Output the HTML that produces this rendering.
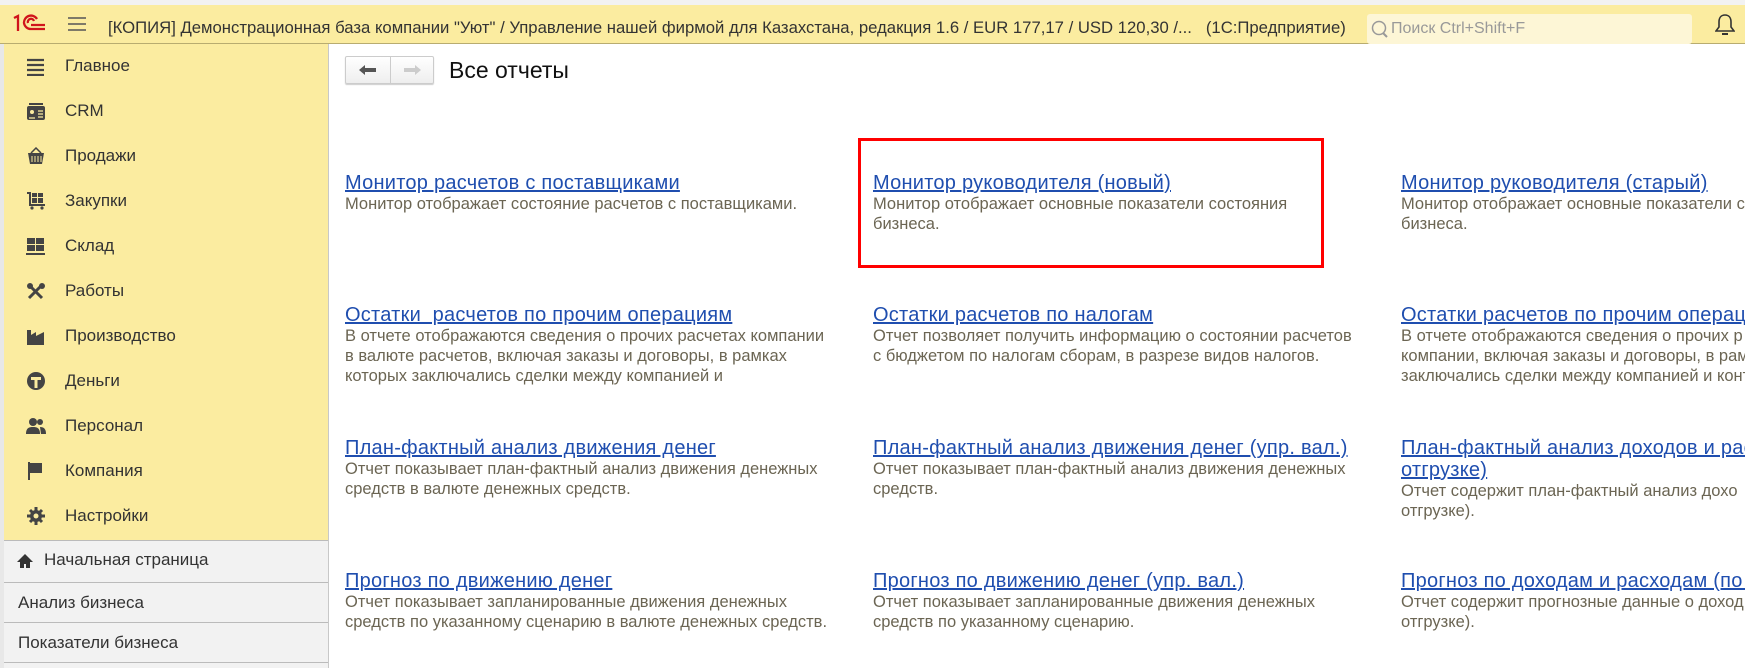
<!DOCTYPE html>
<html><head><meta charset="utf-8"><style>
*{margin:0;padding:0;box-sizing:border-box}
body{width:1745px;height:668px;overflow:hidden;background:#fff;font-family:"Liberation Sans",Arial,sans-serif;position:relative}
.top{position:absolute;left:0;top:5px;width:1745px;height:39px;background:#fbeca0;border-bottom:1px solid #b8ac70}
.strip{position:absolute;left:0;top:0;width:1745px;height:5px;background:#f2f2f2}
.title{position:absolute;left:108px;top:13px;font-size:16.7px;color:#333;white-space:nowrap}
.search{position:absolute;left:1367px;top:9px;width:325px;height:30px;background:#fdf6d6;border-radius:3px;font-size:16px;color:#999;padding:6px 0 0 24px}
.side{position:absolute;left:0;top:44px;width:329px;height:624px;background:#f2f2f2;border-left:4px solid #e8e8e8;border-right:1px solid #c8c8c8}
.yel{position:absolute;left:0;top:0;width:324px;height:497px;background:#fbeca0;border-bottom:1px solid #bbb}
.mi{position:absolute;left:61px;font-size:17px;color:#333}
.ic{position:absolute;left:22px;width:20px;height:18px}
.sub{position:absolute;left:0;width:324px;border-bottom:1px solid #bbb;font-size:17px;color:#333;padding-left:14px}
.nav{position:absolute;left:345px;top:56px;width:89px;height:28px;border:1px solid #ccc;border-radius:2px;background:linear-gradient(#fff,#eee);box-shadow:0 1px 1px #ccc}
.h{position:absolute;left:449px;top:57px;font-size:23px;color:#111}
.it{position:absolute;width:520px;white-space:nowrap}
.it a{display:block;font-size:20px;letter-spacing:0.25px;color:#1f4eaf;text-decoration:underline;line-height:22px}
.it p{font-size:16.5px;color:#6b6553;line-height:20px}
.red{position:absolute;left:858px;top:138px;width:466px;height:130px;border:3px solid #f00}
</style></head><body>
<div class="strip"></div>
<div class="top">
<svg style="position:absolute;left:12px;top:9px" width="34" height="18" viewBox="0 0 34 18"><path d="M2 4l4-2v15M12 9a7 7 0 0 1 13-4M12 9a7 7 0 0 0 7 6h14M16 9a3 3 0 0 1 6-2M19 11h14" fill="none" stroke="#d0141b" stroke-width="2.3"/></svg>
<svg style="position:absolute;left:68px;top:12px" width="18" height="14"><path d="M0 1h18M0 7h18M0 13h18" stroke="#555" stroke-width="1.5"/></svg>
<div class="title">[КОПИЯ] Демонстрационная база компании "Уют" / Управление нашей фирмой для Казахстана, редакция 1.6 / EUR 177,17 / USD 120,30 /...&nbsp;&nbsp;&nbsp;(1С:Предприятие)</div>
<div class="search"><svg style="position:absolute;left:4px;top:6px" width="18" height="19"><circle cx="8" cy="8" r="6.5" fill="none" stroke="#999" stroke-width="1.5"/><path d="M12 13l4 4" stroke="#999" stroke-width="2"/></svg>Поиск Ctrl+Shift+F</div>
<svg style="position:absolute;left:1715px;top:8px" width="20" height="24"><path d="M10 2c-4 0-6 3-6 7v5l-3 4h18l-3-4V9c0-4-2-7-6-7z" fill="none" stroke="#333" stroke-width="1.6"/><path d="M7 20h6v2H7z" fill="#333"/></svg>
</div>
<div class="side">
<div class="yel">
<svg class="ic" style="top:14px" viewBox="0 0 20 18"><path d="M1 2h17M1 7h17M1 12h17M1 17h17" stroke="#444" stroke-width="2.2"/></svg><div class="mi" style="top:12px">Главное</div>
<svg class="ic" style="top:58px" viewBox="0 0 20 18"><rect x="1" y="4" width="18" height="14" rx="2" fill="#444"/><rect x="3" y="1" width="14" height="2" fill="#444"/><circle cx="6" cy="10" r="2" fill="#fbeca0"/><path d="M12 9h5M12 12h5M12 15h5M3 16h6" stroke="#fbeca0" stroke-width="1.3"/></svg><div class="mi" style="top:57px">CRM</div>
<svg class="ic" style="top:103px" viewBox="0 0 20 18"><path d="M2 6h16l-2 11H4z" fill="#444"/><path d="M5 6l5-5 5 5" fill="none" stroke="#444" stroke-width="1.5"/><path d="M6 9v6M9 9v6M12 9v6M15 9v6" stroke="#fbeca0"/></svg><div class="mi" style="top:102px">Продажи</div>
<svg class="ic" style="top:148px" viewBox="0 0 20 18"><path d="M1 1h3v12h15" fill="none" stroke="#444" stroke-width="2"/><rect x="6" y="1" width="5" height="4" fill="#444"/><rect x="12" y="1" width="5" height="4" fill="#444"/><rect x="6" y="6" width="5" height="5" fill="#444"/><rect x="12" y="6" width="5" height="5" fill="#444"/><circle cx="6" cy="16" r="1.6" fill="#444"/><circle cx="16" cy="16" r="1.6" fill="#444"/></svg><div class="mi" style="top:147px">Закупки</div>
<svg class="ic" style="top:193px" viewBox="0 0 20 18"><rect x="1" y="1" width="8" height="6" fill="#444"/><rect x="10" y="1" width="8" height="6" fill="#444"/><rect x="1" y="8" width="8" height="6" fill="#444"/><rect x="10" y="8" width="8" height="6" fill="#444"/><rect x="0" y="16" width="19" height="2" fill="#444"/></svg><div class="mi" style="top:192px">Склад</div>
<svg class="ic" style="top:238px" viewBox="0 0 20 18"><path d="M3 16L16 3M3 3l13 13" stroke="#444" stroke-width="3"/><circle cx="4" cy="4" r="3" fill="#444"/><circle cx="16" cy="4" r="3" fill="#444"/></svg><div class="mi" style="top:237px">Работы</div>
<svg class="ic" style="top:283px" viewBox="0 0 20 18"><path d="M1 18V3h4v5l5-3v4l8-4v13z" fill="#444"/></svg><div class="mi" style="top:282px">Производство</div>
<svg class="ic" style="top:328px" viewBox="0 0 20 18"><circle cx="10" cy="9" r="9" fill="#444"/><path d="M5 5h10v3H11.5v8h-3V8H5z" fill="#fbeca0"/></svg><div class="mi" style="top:327px">Деньги</div>
<svg class="ic" style="top:373px" viewBox="0 0 20 18"><circle cx="7" cy="5" r="4" fill="#444"/><path d="M0 17c0-6 3-7 7-7s7 1 7 7z" fill="#444"/><circle cx="14" cy="5" r="3" fill="#444"/><path d="M14 10c4 0 6 2 6 7h-5" fill="#444"/></svg><div class="mi" style="top:372px">Персонал</div>
<svg class="ic" style="top:418px" viewBox="0 0 20 18"><path d="M3 0v18" stroke="#444" stroke-width="2"/><path d="M4 1h12v10H4z" fill="#444"/></svg><div class="mi" style="top:417px">Компания</div>
<svg class="ic" style="top:463px" viewBox="0 0 20 18"><circle cx="10" cy="9" r="6" fill="#444"/><path d="M10 0v18M1 9h18M4 3l12 12M16 3L4 15" stroke="#444" stroke-width="3"/><circle cx="10" cy="9" r="2.5" fill="#fbeca0"/></svg><div class="mi" style="top:462px">Настройки</div>
</div>
<svg style="position:absolute;left:12px;top:509px" width="18" height="16"><path d="M9 1L1 9h3v6h4v-4h2v4h4V9h3z" fill="#333"/></svg>
<div class="sub" style="top:497px;height:42px;padding:9px 0 0 40px">Начальная страница</div>
<div class="sub" style="top:539px;height:40px;padding-top:10px">Анализ бизнеса</div>
<div class="sub" style="top:579px;height:40px;padding-top:10px">Показатели бизнеса</div>
</div>
<div class="nav"><div style="position:absolute;left:44px;top:0;width:1px;height:26px;background:#ccc"></div>
<svg style="position:absolute;left:12px;top:7px" width="20" height="12"><path d="M1 6l6-5v3h11v4H7v3z" fill="#555"/></svg>
<svg style="position:absolute;left:56px;top:7px" width="20" height="12"><path d="M19 6l-6-5v3H2v4h11v3z" fill="#ccc"/></svg></div>
<div class="h">Все отчеты</div>
<div class="red"></div>
<div class="it" style="left:345px;top:172px"><a>Монитор расчетов с поставщиками</a><p>Монитор отображает состояние расчетов с поставщиками.</p></div>
<div class="it" style="left:873px;top:172px"><a>Монитор руководителя (новый)</a><p>Монитор отображает основные показатели состояния<br>бизнеса.</p></div>
<div class="it" style="left:1401px;top:172px"><a>Монитор руководителя (старый)</a><p>Монитор отображает основные показатели с<br>бизнеса.</p></div>
<div class="it" style="left:345px;top:304px"><a>Остатки&nbsp; расчетов по прочим операциям</a><p>В отчете отображаются сведения о прочих расчетах компании<br>в валюте расчетов, включая заказы и договоры, в рамках<br>которых заключались сделки между компанией и</p></div>
<div class="it" style="left:873px;top:304px"><a>Остатки расчетов по налогам</a><p>Отчет позволяет получить информацию о состоянии расчетов<br>с бюджетом по налогам сборам, в разрезе видов налогов.</p></div>
<div class="it" style="left:1401px;top:304px"><a>Остатки расчетов по прочим операци</a><p>В отчете отображаются сведения о прочих р<br>компании, включая заказы и договоры, в рам<br>заключались сделки между компанией и конт</p></div>
<div class="it" style="left:345px;top:437px"><a>План-фактный анализ движения денег</a><p>Отчет показывает план-фактный анализ движения денежных<br>средств в валюте денежных средств.</p></div>
<div class="it" style="left:873px;top:437px"><a>План-фактный анализ движения денег (упр. вал.)</a><p>Отчет показывает план-фактный анализ движения денежных<br>средств.</p></div>
<div class="it" style="left:1401px;top:437px"><a>План-фактный анализ доходов и рас<br>отгрузке)</a><p>Отчет содержит план-фактный анализ дохо<br>отгрузке).</p></div>
<div class="it" style="left:345px;top:570px"><a>Прогноз по движению денег</a><p>Отчет показывает запланированные движения денежных<br>средств по указанному сценарию в валюте денежных средств.</p></div>
<div class="it" style="left:873px;top:570px"><a>Прогноз по движению денег (упр. вал.)</a><p>Отчет показывает запланированные движения денежных<br>средств по указанному сценарию.</p></div>
<div class="it" style="left:1401px;top:570px"><a>Прогноз по доходам и расходам (по о</a><p>Отчет содержит прогнозные данные о доход<br>отгрузке).</p></div>
</body></html>
